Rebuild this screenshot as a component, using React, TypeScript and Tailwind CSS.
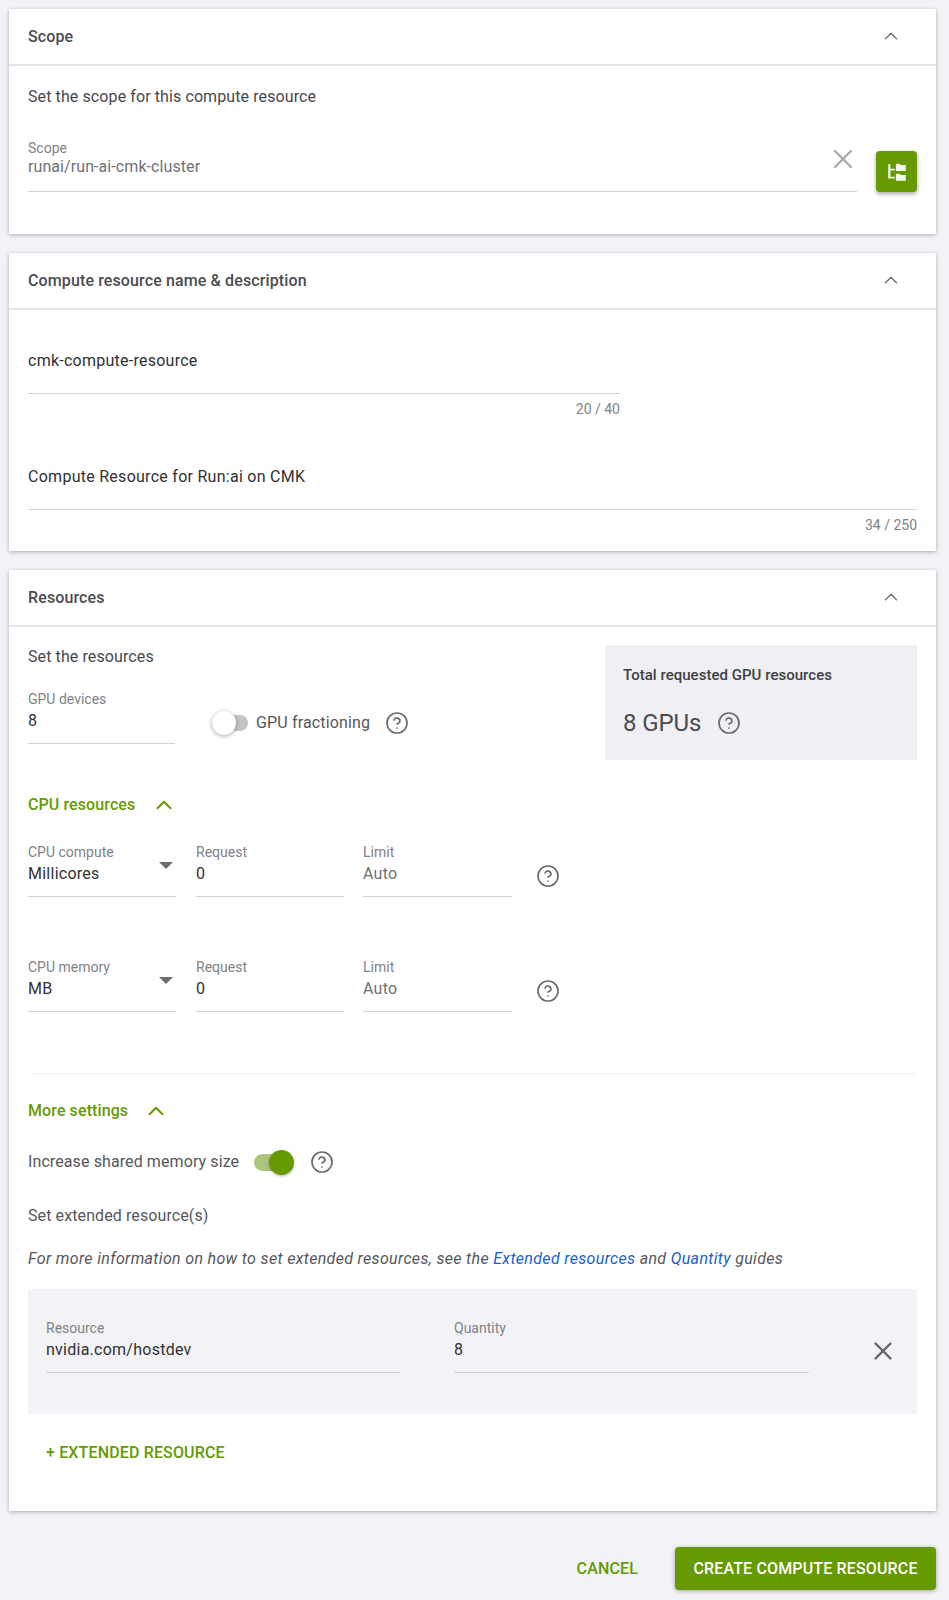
import { ChevronUp, CircleHelp, X } from "lucide-react"

const green = "text-[#659a00]"

function CardHeader({ title }: { title: string }) {
  return (
    <div className="h-[57px] flex items-center justify-between pl-[19px] pr-[34px] border-b-2 border-[#e4e4e7]">
      <span className="text-[16px] font-medium tracking-[0.12px] text-[#4a4c50]">{title}</span>
      <ChevronUp className="w-[22px] h-[22px] mb-[2px] text-[#6f7174]" strokeWidth={1.5} />
    </div>
  )
}

function Field({
  label,
  value,
  muted,
  className,
  labelHeight = "h-[19px]",
  pad = "pb-[11px]",
  tracking = "tracking-[0.25px]",
}: {
  label: string
  value: string
  muted?: boolean
  className?: string
  labelHeight?: string
  pad?: string
  tracking?: string
}) {
  return (
    <div className={`border-b border-[#d4d4d6] ${pad} ${className ?? ""}`}>
      <div className={`text-[14px] leading-[16px] text-[#808285] ${labelHeight}`}>{label}</div>
      <div className={`text-[16px] leading-[22px] ${tracking} ${muted ? "text-[#6f7174]" : "text-[#2f3134]"}`}>{value}</div>
    </div>
  )
}

function Help({ className }: { className?: string }) {
  return <CircleHelp className={`w-[24px] h-[24px] text-[#6a6c6f] shrink-0 ${className ?? ""}`} strokeWidth={1.7} />
}

function CpuRow({ label, value, className }: { label: string; value: string; className?: string }) {
  return (
    <div className={`flex items-start ${className ?? ""}`}>
      <div className="relative w-[148px]">
        <Field label={label} value={value} />
        <span className="absolute right-[3px] top-[18px] w-0 h-0 border-x-[7px] border-x-transparent border-t-[7px] border-t-[#6a6c6f]" />
      </div>
      <Field label="Request" value="0" className="w-[148px] ml-[20px]" />
      <Field label="Limit" value="Auto" muted className="w-[149px] ml-[19px]" />
      <Help className="ml-[24px] mt-[20px]" />
    </div>
  )
}

export default function App() {
  return (
    <div className="min-h-[1600px] w-[949px] bg-[#f2f2f7] pl-[9px] pt-[9px] font-['Roboto',sans-serif]">
      <div className="w-[927px] space-y-[19px]">
        {/* Scope */}
        <section className="bg-white h-[225px] shadow-[0_1px_4px_rgba(0,0,0,0.3)]">
          <CardHeader title="Scope" />
          <div className="pl-[19px] pr-[19px]">
            <p className="mt-[20px] text-[16px] leading-[22px] tracking-[0.1px] text-[#46484b]">Set the scope for this compute resource</p>
            <div className="flex items-start mt-[32px]">
              <div className="relative flex-1">
                <Field label="Scope" value="runai/run-ai-cmk-cluster" muted labelHeight="h-[16px]" pad="pb-[13px]" tracking="tracking-[0.08px]" />
                <X className="absolute right-[-2px] top-[3px] w-[32px] h-[32px] text-[#a8a8aa]" strokeWidth={1.7} />
              </div>
              <button className="ml-[19px] mt-[11px] w-[41px] h-[41px] rounded-[4px] bg-[#659a00] flex items-center justify-center shadow-[0_2px_4px_rgba(0,0,0,0.35)]">
                <svg viewBox="0 0 20 20" className="w-[22px] h-[22px]" fill="#f4f8ea">
                  <path d="M2 3h2v4h4v1.6H4v5.8h4V16H2z" />
                  <path d="M9 2.500h3.400l1 1.200H18V9H9z" />
                  <path d="M9 11.500h3.400l1 1.200H18V18H9z" />
                </svg>
              </button>
            </div>
          </div>
        </section>

        {/* Name and description */}
        <section className="bg-white h-[298px] shadow-[0_1px_4px_rgba(0,0,0,0.3)]">
          <CardHeader title="Compute resource name & description" />
          <div className="pl-[19px] pr-[19px] pt-[40px]">
            <div className="w-[592px]">
              <div className="text-[16px] leading-[22px] tracking-[0.25px] text-[#2f3134] pb-[21px] border-b border-[#d4d4d6]">cmk-compute-resource</div>
              <div className="text-[14px] leading-[16px] text-[#808285] text-right mt-[7px]">20 / 40</div>
            </div>
            <div className="mt-[49px]">
              <div className="text-[16px] leading-[22px] tracking-[0.27px] text-[#2f3134] pb-[21px] border-b border-[#d4d4d6]">Compute Resource for Run:ai on CMK</div>
              <div className="text-[14px] leading-[16px] text-[#808285] text-right mt-[7px]">34 / 250</div>
            </div>
          </div>
        </section>

        {/* Resources */}
        <section className="bg-white h-[941px] shadow-[0_1px_4px_rgba(0,0,0,0.3)]">
          <CardHeader title="Resources" />
          <div className="pl-[19px] pr-[19px]">
            <div className="flex justify-between">
              <div>
                <p className="mt-[19px] text-[16px] leading-[22px] tracking-[0.1px] text-[#46484b]">Set the resources</p>
                <div className="flex items-start mt-[23px]">
                  <Field label="GPU devices" value="8" className="w-[147px]" />
                  <div className="flex items-center ml-[37px] mt-[20px]">
                    <div className="relative w-[36px] h-[16px] rounded-full bg-[#c4c4c6]">
                      <span className="absolute left-0 top-[-4px] w-[24px] h-[24px] rounded-full bg-white shadow-[0_1px_4px_rgba(0,0,0,0.35)]" />
                    </div>
                    <span className="ml-[8px] text-[16px] tracking-[0.15px] text-[#55575a]">GPU fractioning</span>
                    <Help className="ml-[15px]" />
                  </div>
                </div>
              </div>
              <div className="mt-[18px] w-[312px] h-[115px] bg-[#f0eff3] pl-[18px] pt-[20px]">
                <div className="text-[15px] leading-[20px] font-medium tracking-[0.03px] text-[#3f4145]">Total requested GPU resources</div>
                <div className="flex items-center mt-[22px]">
                  <span className="text-[24px] leading-[32px] tracking-[-0.1px] text-[#4a4c4f]">8 GPUs</span>
                  <Help className="ml-[16px]" />
                </div>
              </div>
            </div>

            <div className={`flex items-center mt-[32px] ${green}`}>
              <span className="text-[16px] leading-[22px] font-medium tracking-[0.1px]">CPU resources</span>
              <ChevronUp className="ml-[16px] w-[26px] h-[26px]" strokeWidth={1.8} />
            </div>

            <CpuRow label="CPU compute" value="Millicores" className="mt-[26px]" />
            <CpuRow label="CPU memory" value="MB" className="mt-[62px]" />

            <div className="mt-[61px] ml-[3px] h-px bg-[#f0f0f2]" />

            <div className={`flex items-center mt-[24px] ${green}`}>
              <span className="text-[16px] leading-[22px] font-medium tracking-[0.1px]">More settings</span>
              <ChevronUp className="ml-[15px] w-[26px] h-[26px]" strokeWidth={1.8} />
            </div>

            <div className="flex items-center mt-[27px] h-[22px]">
              <span className="text-[16px] tracking-[0.1px] text-[#55575a]">Increase shared memory size</span>
              <div className="relative ml-[15px] w-[34px] h-[17px] rounded-full bg-[#a9c67c]">
                <span className="absolute right-[-6px] top-[-4px] w-[25px] h-[25px] rounded-full bg-[#659a00] shadow-[0_1px_3px_rgba(0,0,0,0.3)]" />
              </div>
              <Help className="ml-[22px]" />
            </div>

            <p className="mt-[32px] text-[16px] leading-[22px] tracking-[0.1px] text-[#55575a]">Set extended resource(s)</p>
            <p className="mt-[21px] text-[16px] leading-[22px] italic tracking-[0.33px] text-[#55575a]">
              For more information on how to set extended resources, see the{" "}
              <a className="text-[#1a5fd0]">Extended resources</a> and <a className="text-[#1a5fd0]">Quantity</a> guides
            </p>

            <div className="mt-[19px] h-[125px] bg-[#f2f2f7] flex items-start pl-[18px] pt-[31px]">
              <Field label="Resource" value="nvidia.com/hostdev" className="w-[354px]" />
              <Field label="Quantity" value="8" className="w-[355px] ml-[54px]" />
              <X className="ml-[59px] mt-[16px] w-[30px] h-[30px] text-[#5f6164]" strokeWidth={1.8} />
            </div>

            <div className={`mt-[28px] ml-[18px] text-[16px] leading-[22px] font-medium tracking-[0.15px] ${green}`}>+ EXTENDED RESOURCE</div>
          </div>
        </section>
      </div>

      <div className="w-[927px] flex items-center justify-end mt-[36px]">
        <span className={`text-[16px] font-medium tracking-[0.15px] mr-[37px] ${green}`}>CANCEL</span>
        <button className="w-[261px] h-[43px] rounded-[4px] bg-[#659a00] text-white text-[16px] font-medium tracking-[0.15px] shadow-[0_1px_4px_rgba(0,0,0,0.35)]">
          CREATE COMPUTE RESOURCE
        </button>
      </div>
    </div>
  )
}
